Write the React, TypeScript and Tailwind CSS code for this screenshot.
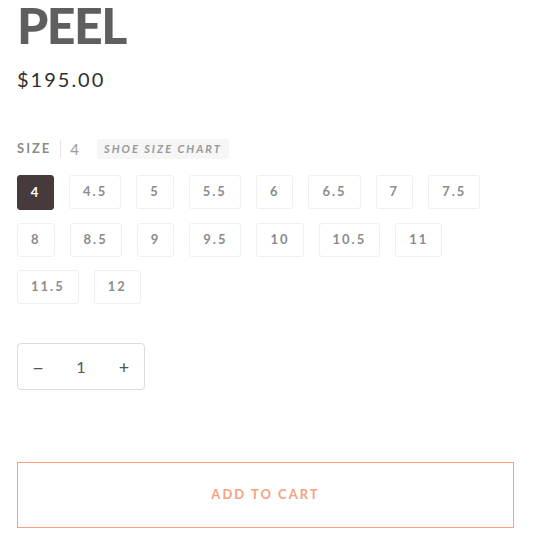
import { useState } from 'react';

const sizes = ['4', '4.5', '5', '5.5', '6', '6.5', '7', '7.5', '8', '8.5', '9', '9.5', '10', '10.5', '11', '11.5', '12'];

export default function App() {
  const [selected, setSelected] = useState('4');
  const [qty, setQty] = useState(1);

  return (
    <div className="min-h-screen bg-white pl-[17px] pr-[26px] font-['Lato',sans-serif]">
      <h1 className="text-[50px] font-black leading-[50px] tracking-[-1.5px] text-[#5f5f5f]">PEEL</h1>

      <div className="mt-[17px] text-[20px] leading-[24px] tracking-[2px] text-[#2f2f2f]">$195.00</div>

      <div className="mt-[48px] flex items-center h-[20px]">
        <span className="text-[13px] font-bold tracking-[2px] text-[#8c8c8c]">SIZE</span>
        <span className="mx-[9px] h-[18px] w-px bg-[#e4e4e4]" />
        <span className="text-[15px] text-[#9a9a9a]">4</span>
        <span className="ml-[18px] rounded-[3px] bg-[#f6f6f6] px-[7px] py-[2px] text-[11px] font-bold italic tracking-[2px] text-[#999]">
          SHOE SIZE CHART
        </span>
      </div>

      <div className="mt-[16px] flex flex-wrap gap-x-[15px] gap-y-[13px] pr-[20px]">
        {sizes.map((s) => (
          <button
            key={s}
            onClick={() => setSelected(s)}
            className={
              s === selected
                ? 'h-[35px] min-w-[37px] rounded-[3px] border border-[#463a3a] bg-[#463a3a] px-[12px] text-[13px] font-bold tracking-[2px] text-white'
                : 'h-[34px] min-w-[37px] rounded-[3px] border border-[#f0f0f0] bg-white px-[13px] text-[13px] font-bold tracking-[2px] text-[#8c8c8c]'
            }
          >
            {s}
          </button>
        ))}
      </div>

      <div className="mt-[39px] flex h-[47px] w-[128px] items-center justify-between rounded-[4px] border border-[#dcdcdc] px-[14px] text-[16px] text-[#555]">
        <button onClick={() => setQty(Math.max(1, qty - 1))} className="w-[12px] text-[20px] leading-none">−</button>
        <span>{qty}</span>
        <button onClick={() => setQty(qty + 1)} className="w-[12px] text-[18px] leading-none">+</button>
      </div>

      <button className="mt-[72px] flex h-[66px] w-full items-center justify-center border border-[#f4a280] bg-white text-[13px] font-bold tracking-[2px] text-[#f4a280]">
        ADD TO CART
      </button>
    </div>
  );
}
